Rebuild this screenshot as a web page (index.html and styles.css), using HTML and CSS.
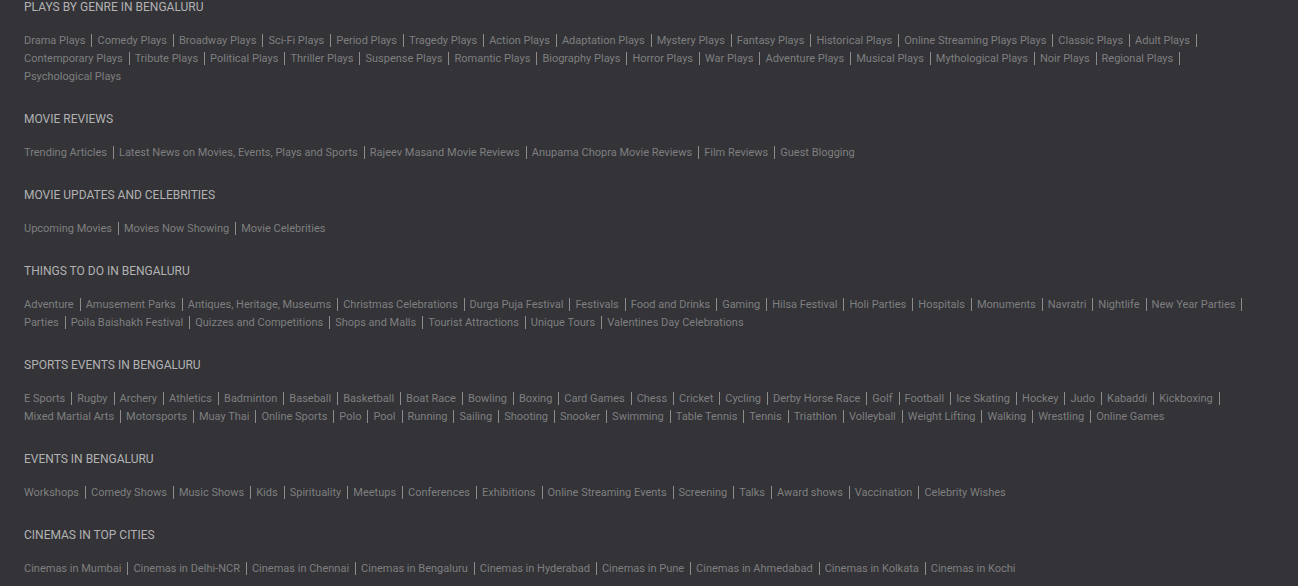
FILE: index.html
```html
<!DOCTYPE html>
<html lang="en">
<head>
<meta charset="utf-8">
<title>Site links</title>
<link rel="stylesheet" href="styles.css">
</head>
<body>
<footer class="footer">
<section class="group"><h2 class="title">Plays by Genre in Bengaluru</h2>
<ul class="links"><li><a href="#">Drama Plays</a></li> <li><a href="#">Comedy Plays</a></li> <li><a href="#">Broadway Plays</a></li> <li><a href="#">Sci-Fi Plays</a></li> <li><a href="#">Period Plays</a></li> <li><a href="#">Tragedy Plays</a></li> <li><a href="#">Action Plays</a></li> <li><a href="#">Adaptation Plays</a></li> <li><a href="#">Mystery Plays</a></li> <li><a href="#">Fantasy Plays</a></li> <li><a href="#">Historical Plays</a></li> <li><a href="#">Online Streaming Plays Plays</a></li> <li><a href="#">Classic Plays</a></li> <li><a href="#">Adult Plays</a></li> <li><a href="#">Contemporary Plays</a></li> <li><a href="#">Tribute Plays</a></li> <li><a href="#">Political Plays</a></li> <li><a href="#">Thriller Plays</a></li> <li><a href="#">Suspense Plays</a></li> <li><a href="#">Romantic Plays</a></li> <li><a href="#">Biography Plays</a></li> <li><a href="#">Horror Plays</a></li> <li><a href="#">War Plays</a></li> <li><a href="#">Adventure Plays</a></li> <li><a href="#">Musical Plays</a></li> <li><a href="#">Mythological Plays</a></li> <li><a href="#">Noir Plays</a></li> <li><a href="#">Regional Plays</a></li> <li><a href="#">Psychological Plays</a></li></ul></section>
<section class="group"><h2 class="title">Movie Reviews</h2>
<ul class="links"><li><a href="#">Trending Articles</a></li> <li><a href="#">Latest News on Movies, Events, Plays and Sports</a></li> <li><a href="#">Rajeev Masand Movie Reviews</a></li> <li><a href="#">Anupama Chopra Movie Reviews</a></li> <li><a href="#">Film Reviews</a></li> <li><a href="#">Guest Blogging</a></li></ul></section>
<section class="group"><h2 class="title">Movie Updates and Celebrities</h2>
<ul class="links"><li><a href="#">Upcoming Movies</a></li> <li><a href="#">Movies Now Showing</a></li> <li><a href="#">Movie Celebrities</a></li></ul></section>
<section class="group"><h2 class="title">Things to do in Bengaluru</h2>
<ul class="links"><li><a href="#">Adventure</a></li> <li><a href="#">Amusement Parks</a></li> <li><a href="#">Antiques, Heritage, Museums</a></li> <li><a href="#">Christmas Celebrations</a></li> <li><a href="#">Durga Puja Festival</a></li> <li><a href="#">Festivals</a></li> <li><a href="#">Food and Drinks</a></li> <li><a href="#">Gaming</a></li> <li><a href="#">Hilsa Festival</a></li> <li><a href="#">Holi Parties</a></li> <li><a href="#">Hospitals</a></li> <li><a href="#">Monuments</a></li> <li><a href="#">Navratri</a></li> <li><a href="#">Nightlife</a></li> <li><a href="#">New Year Parties</a></li> <li><a href="#">Parties</a></li> <li><a href="#">Poila Baishakh Festival</a></li> <li><a href="#">Quizzes and Competitions</a></li> <li><a href="#">Shops and Malls</a></li> <li><a href="#">Tourist Attractions</a></li> <li><a href="#">Unique Tours</a></li> <li><a href="#">Valentines Day Celebrations</a></li></ul></section>
<section class="group"><h2 class="title">Sports Events in Bengaluru</h2>
<ul class="links"><li><a href="#">E Sports</a></li> <li><a href="#">Rugby</a></li> <li><a href="#">Archery</a></li> <li><a href="#">Athletics</a></li> <li><a href="#">Badminton</a></li> <li><a href="#">Baseball</a></li> <li><a href="#">Basketball</a></li> <li><a href="#">Boat Race</a></li> <li><a href="#">Bowling</a></li> <li><a href="#">Boxing</a></li> <li><a href="#">Card Games</a></li> <li><a href="#">Chess</a></li> <li><a href="#">Cricket</a></li> <li><a href="#">Cycling</a></li> <li><a href="#">Derby Horse Race</a></li> <li><a href="#">Golf</a></li> <li><a href="#">Football</a></li> <li><a href="#">Ice Skating</a></li> <li><a href="#">Hockey</a></li> <li><a href="#">Judo</a></li> <li><a href="#">Kabaddi</a></li> <li><a href="#">Kickboxing</a></li> <li><a href="#">Mixed Martial Arts</a></li> <li><a href="#">Motorsports</a></li> <li><a href="#">Muay Thai</a></li> <li><a href="#">Online Sports</a></li> <li><a href="#">Polo</a></li> <li><a href="#">Pool</a></li> <li><a href="#">Running</a></li> <li><a href="#">Sailing</a></li> <li><a href="#">Shooting</a></li> <li><a href="#">Snooker</a></li> <li><a href="#">Swimming</a></li> <li><a href="#">Table Tennis</a></li> <li><a href="#">Tennis</a></li> <li><a href="#">Triathlon</a></li> <li><a href="#">Volleyball</a></li> <li><a href="#">Weight Lifting</a></li> <li><a href="#">Walking</a></li> <li><a href="#">Wrestling</a></li> <li><a href="#">Online Games</a></li></ul></section>
<section class="group"><h2 class="title">Events in Bengaluru</h2>
<ul class="links"><li><a href="#">Workshops</a></li> <li><a href="#">Comedy Shows</a></li> <li><a href="#">Music Shows</a></li> <li><a href="#">Kids</a></li> <li><a href="#">Spirituality</a></li> <li><a href="#">Meetups</a></li> <li><a href="#">Conferences</a></li> <li><a href="#">Exhibitions</a></li> <li><a href="#">Online Streaming Events</a></li> <li><a href="#">Screening</a></li> <li><a href="#">Talks</a></li> <li><a href="#">Award shows</a></li> <li><a href="#">Vaccination</a></li> <li><a href="#">Celebrity Wishes</a></li></ul></section>
<section class="group"><h2 class="title">Cinemas in Top Cities</h2>
<ul class="links"><li><a href="#">Cinemas in Mumbai</a></li> <li><a href="#">Cinemas in Delhi-NCR</a></li> <li><a href="#">Cinemas in Chennai</a></li> <li><a href="#">Cinemas in Bengaluru</a></li> <li><a href="#">Cinemas in Hyderabad</a></li> <li><a href="#">Cinemas in Pune</a></li> <li><a href="#">Cinemas in Ahmedabad</a></li> <li><a href="#">Cinemas in Kolkata</a></li> <li><a href="#">Cinemas in Kochi</a></li></ul></section>
</footer>
</body>
</html>
```
FILE: styles.css
```css
body {
  margin: 0;
  background: #333338;
  font-family: Roboto, sans-serif;
}

.footer {
  display: flex;
  flex-direction: column;
  gap: 26px;
  padding: 0 24px 8px;
}

.title {
  margin: 0 0 18px;
  font-size: 12px;
  line-height: 14px;
  font-weight: 400;
  text-transform: uppercase;
  color: #b2b2b2;
}

.links {
  display: flex;
  flex-wrap: wrap;
  margin: 0;
  padding: 0;
  list-style: none;
  font-size: 11px;
  line-height: 18px;
  color: #7f7f7f;
}

.links li {
  display: flex;
  align-items: center;
}

.links li:not(:last-child)::after {
  content: "";
  width: 1px;
  height: 13px;
  margin: 0 5px 2px 6px;
  background: #8c8c8c;
}

.links a {
  color: inherit;
  text-decoration: none;
}
```
